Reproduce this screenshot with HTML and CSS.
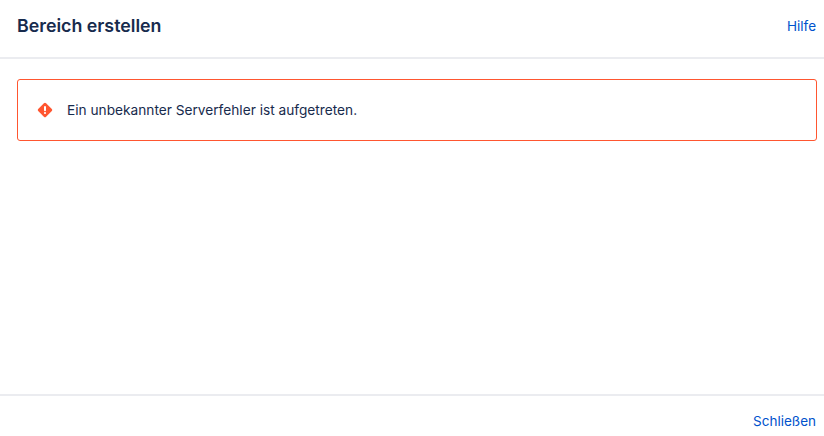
FILE: index.html
```html
<!DOCTYPE html>
<html lang="de">

<head>
    <meta charset="UTF-8">
    <meta name="viewport" content="width=device-width, initial-scale=1.0">
    <title>Bereich erstellen</title>
    <link rel="stylesheet" href="styles.css">
</head>

<body>

    <div class="dialog">
        <header class="dialogHeader">
            <h2>Bereich erstellen</h2>
            <a class="link" href="#">Hilfe</a>
        </header>

        <main class="dialogBody">
            <div class="errorBox">
                <svg class="errorIcon" width="16" height="16" viewBox="0 0 16 16">
                    <path d="M6.9 1.2a1.6 1.6 0 0 1 2.200 0l5.700 5.700a1.600 1.600 0 0 1 0 2.200l-5.700 5.700a1.600 1.600 0 0 1-2.200 0L1.200 9.100a1.600 1.600 0 0 1 0-2.200z" fill="#ff5630"/>
                    <rect x="7" y="4" width="2" height="5.200" rx="1" fill="#fff"/>
                    <circle cx="8" cy="11" r="1.100" fill="#fff"/>
                </svg>
                <p>Ein unbekannter Serverfehler ist aufgetreten.</p>
            </div>
        </main>

        <footer class="dialogFooter">
            <a class="link" href="#">Schließen</a>
        </footer>
    </div>

</body>

</html>
```

FILE: styles.css
```css
* {
    margin: 0;
    padding: 0;
    box-sizing: border-box;
}

body {
    background: #fff;
    color: #172b4d;
    font-family: Inter, "Liberation Sans", sans-serif;
    font-size: 14px;
}

.dialog {
    display: flex;
    flex-direction: column;
    width: 824px;
    height: 436px;
}

.dialogHeader {
    display: flex;
    justify-content: space-between;
    align-items: center;
    height: 59px;
    padding: 0 8px 6px 17px;
    border-bottom: 2px solid #ebecf0;
}

.dialogHeader h2 {
    font-size: 17.800px;
    font-weight: 600;
    line-height: 24px;
}

.dialogBody {
    flex: 1;
    padding: 20px 7px 0 17px;
}

.errorBox {
    display: flex;
    align-items: center;
    gap: 14px;
    height: 62px;
    padding: 0 19px;
    border: 1px solid #ff5630;
    border-radius: 3px;
}

.errorBox p {
    font-size: 13.700px;
    line-height: 20px;
}

.dialogFooter {
    display: flex;
    justify-content: flex-end;
    align-items: center;
    height: 42px;
    padding: 10px 8px 0 0;
    border-top: 2px solid #ebecf0;
}

.link {
    color: #0052cc;
    font-size: 13.500px;
    text-decoration: none;
}
```
